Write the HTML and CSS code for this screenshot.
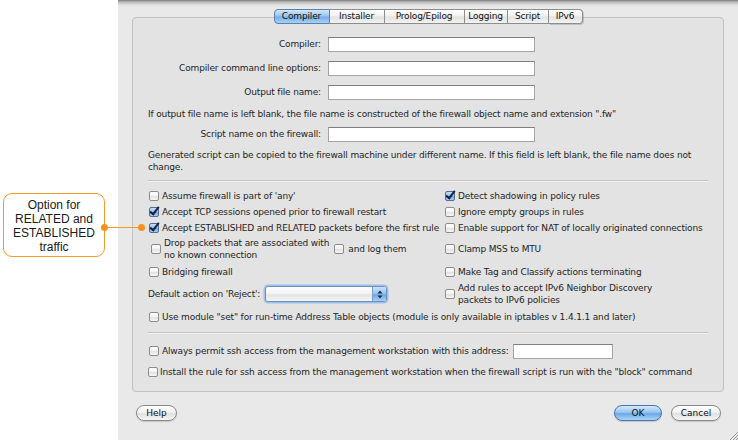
FILE: index.html
```html
<!DOCTYPE html>
<html>
<head>
<meta charset="utf-8">
<title>Firewall settings</title>
<link rel="stylesheet" href="styles.css">
</head>
<body>
<div class="page">
  <aside class="annot">
    <div class="callout">Option for<br>RELATED and<br>ESTABLISHED<br>traffic</div>
    <div class="connector"><span class="dot dot-l"></span><span class="dot dot-r"></span></div>
  </aside>
  <main class="dialog">
    <section class="group">
      <nav class="tabs">
        <span class="tab tab-compiler sel">Compiler</span>
        <span class="tab tab-installer">Installer</span>
        <span class="tab tab-prolog">Prolog/Epilog</span>
        <span class="tab tab-logging">Logging</span>
        <span class="tab tab-script">Script</span>
        <span class="tab tab-ipv6">IPv6</span>
      </nav>

      <div class="fields">
        <label class="flabel">Compiler:</label><span class="input"></span>
        <label class="flabel">Compiler command line options:</label><span class="input"></span>
        <label class="flabel">Output file name:</label><span class="input"></span>
      </div>
      <p class="note note-1">If output file name is left blank, the file name is constructed of the firewall object name and extension ".fw"</p>
      <div class="fields fields-script">
        <label class="flabel">Script name on the firewall:</label><span class="input"></span>
      </div>
      <p class="note note-2">Generated script can be copied to the firewall machine under different name. If this field is left blank, the file name does not change.</p>

      <div class="sep sep-1"></div>

      <div class="options">
        <div class="opt"><span class="cb"></span><span>Assume firewall is part of 'any'</span></div>
        <div class="opt opt-r"><span class="cb on"></span><span>Detect shadowing in policy rules</span></div>

        <div class="opt"><span class="cb on"></span><span>Accept TCP sessions opened prior to firewall restart</span></div>
        <div class="opt opt-r"><span class="cb"></span><span>Ignore empty groups in rules</span></div>

        <div class="opt"><span class="cb on"></span><span>Accept ESTABLISHED and RELATED packets before the first rule</span></div>
        <div class="opt opt-r"><span class="cb"></span><span>Enable support for NAT of locally originated connections</span></div>

        <div class="opt opt-drop"><span class="cb"></span><span class="drop-text">Drop packets that are associated with<br>no known connection</span><span class="cb cb-log"></span><span>and log them</span></div>
        <div class="opt opt-r"><span class="cb"></span><span>Clamp MSS to MTU</span></div>

        <div class="opt"><span class="cb"></span><span>Bridging firewall</span></div>
        <div class="opt opt-r"><span class="cb"></span><span>Make Tag and Classify actions terminating</span></div>

        <div class="opt opt-reject"><span class="reject-label">Default action on 'Reject':</span><span class="popup"><span class="popup-arrows"><svg width="6" height="9" viewBox="0 0 6 9"><path d="M3 0.5 L5.5 3.5 H0.5 Z M3 8.5 L5.5 5.5 H0.5 Z" fill="#1b2b44"/></svg></span></span></div>
        <div class="opt opt-r opt-wrap"><span class="cb"></span><span class="wrap-text">Add rules to accept IPv6 Neighbor Discovery<br>packets to IPv6 policies</span></div>

        <div class="opt opt-span"><span class="cb"></span><span>Use module "set" for run-time Address Table objects (module is only available in iptables v 1.4.1.1 and later)</span></div>
      </div>

      <div class="sep sep-2"></div>

      <div class="opt opt-ssh"><span class="cb"></span><span>Always permit ssh access from the management workstation with this address:</span><span class="input input-addr"></span></div>
      <div class="opt opt-install"><span class="cb"></span><span>Install the rule for ssh access from the management workstation when the firewall script is run with the "block" command</span></div>
    </section>

    <footer class="buttons">
      <button class="btn btn-help">Help</button>
      <span class="spacer"></span>
      <button class="btn btn-ok">OK</button>
      <button class="btn btn-cancel">Cancel</button>
    </footer>
    <svg class="grip" width="9" height="9" viewBox="0 0 9 9"><path d="M9 1 L1 9 M9 4 L4 9 M9 7 L7 9" stroke="#9a9a9a" stroke-width="1"/></svg>
  </main>
</div>
</body>
</html>
```

FILE: styles.css
```css
* { box-sizing: border-box; }
html, body { margin: 0; padding: 0; background: #ffffff; }
body { width: 738px; height: 440px; overflow: hidden; }

.page {
  display: flex;
  width: 738px;
  height: 440px;
}

/* annotation */
.annot {
  width: 118px;
  flex: none;
  position: relative;
}
.callout {
  margin: 193px 0 0 3px;
  width: 102px;
  height: 64px;
  border: 1.3px solid #f59a2e;
  border-radius: 9px;
  background: #fff;
  font-family: "Liberation Sans", Arial, sans-serif;
  font-size: 12px;
  line-height: 14px;
  color: #1a1a1a;
  text-align: center;
  padding-top: 4px;
}
.connector {
  position: absolute;
  left: 104px;
  top: 227px;
  width: 38px;
  height: 1.4px;
  background: #f59a2e;
  z-index: 2;
}
.dot {
  position: absolute;
  top: -3px;
  width: 7px;
  height: 7px;
  border-radius: 50%;
  background: #f7921c;
}
.dot-l { left: -3px; }
.dot-r { right: -3px; }

/* dialog */
.dialog {
  flex: 1;
  position: relative;
  height: 440px;
  background: linear-gradient(#7c7c7c 0, #b9b9b9 2px, #e1e1e1 5px, #e9e9e9 8px);
  font-family: "DejaVu Sans", "Lucida Grande", sans-serif;
  font-size: 9px;
  letter-spacing: -0.15px;
  color: #1e1e1e;
  padding-top: 17px;
}

.group {
  margin: 0 14px;
  border: 1px solid #c2c2c2;
  border-radius: 4px;
  background: #e3e3e3;
  padding: 0 15px 11px 15px;
}

.tabs {
  display: flex;
  justify-content: center;
  margin-top: -9px;
  height: 15px;
}
.tab {
  height: 15px;
  line-height: 13px;
  text-align: center;
  border: 1px solid #8d8d8d;
  border-left: none;
  background: linear-gradient(#ffffff, #f1f1f1 45%, #e2e2e2 55%, #f3f3f3);
  color: #111;
}
.tab:first-child { border-left: 1px solid #5b7fae; border-radius: 4px 0 0 4px; }
.tab:last-child { border-radius: 0 4px 4px 0; box-shadow: 1px 1px 0 rgba(0,0,0,0.15); }
.tab.sel {
  background: linear-gradient(#d2e6f9, #9ac6f0 45%, #74aeea 55%, #a9d3f7);
  border-color: #5b7fae;
}
.tab-compiler { width: 56px; }
.tab-installer { width: 55px; }
.tab-prolog { width: 80px; }
.tab-logging { width: 43px; }
.tab-script { width: 41px; }
.tab-ipv6 { width: 34px; }

/* text fields */
.fields {
  display: grid;
  grid-template-columns: 173px 207px;
  column-gap: 7px;
  grid-auto-rows: 24px;
  align-items: center;
  margin-top: 8px;
}
.fields-script { margin-top: 2px; }
.flabel { text-align: right; }
.input {
  display: block;
  height: 15px;
  background: #fff;
  border: 1px solid #a4a4a4;
  border-top-color: #7f7f7f;
}
.note {
  margin: 0;
  line-height: 12px;
}
.note-1 { margin-top: 4px; }
.note-2 { margin-top: 3px; }

.sep {
  height: 1px;
  background: #c6c6c6;
  box-shadow: 0 1px 0 #f0f0f0;
}
.sep-1 { margin-top: 7px; }
.sep-2 { margin-top: 5px; }

/* checkbox options */
.options {
  display: grid;
  grid-template-columns: 296px 1fr;
  grid-template-rows: 16px 16px 16px 25px 21px 24px 21px;
  align-items: center;
  margin-top: 7px;
}
.opt {
  display: flex;
  align-items: center;
  gap: 3px;
  white-space: nowrap;
}
.opt-span { grid-column: 1 / 3; }

.cb {
  flex: none;
  width: 10px;
  height: 10px;
  margin-left: 1px;
  border: 1px solid #8b8b8b;
  border-radius: 2px;
  background: linear-gradient(#ffffff, #f2f2f2 50%, #e3e3e3 55%, #f7f7f7);
  position: relative;
}
.cb.on {
  border-color: #4e6f9c;
  background: linear-gradient(#c8e0f7, #8fbfee 50%, #6aa6e6 55%, #a5d0f7);
}
.cb.on::after {
  content: "";
  position: absolute;
  left: 2px;
  top: -3px;
  width: 3px;
  height: 8px;
  border-right: 2px solid #1a1f3a;
  border-bottom: 2px solid #1a1f3a;
  transform: rotate(38deg);
  transform-origin: 50% 50%;
}

.opt-drop > .cb:first-child { margin-left: 3px; }
.drop-text { line-height: 12px; }
.cb-log { margin-left: 2px; margin-right: 1px; }

.opt-wrap .wrap-text { line-height: 12px; }

.opt-reject { gap: 5px; }
.popup {
  display: flex;
  justify-content: flex-end;
  width: 122px;
  height: 16px;
  border: 1px solid #6c8fc0;
  border-radius: 3px;
  background: linear-gradient(#ffffff, #f0f0f0 50%, #e4e4e4 55%, #f6f6f6);
  box-shadow: 0 0 0 1.5px #9fc0ea;
  overflow: hidden;
}
.popup-arrows {
  width: 14px;
  display: flex;
  align-items: center;
  justify-content: center;
  background: linear-gradient(#cfe4f8, #8fbff0 50%, #6ba7e7 55%, #a7d1f7);
  border-left: 1px solid #7d9fcc;
}

.opt-ssh { margin-top: 10px; height: 16px; }
.input-addr { width: 100px; margin-left: 1px; }
.opt-install { margin-top: 5px; height: 16px; gap: 2px; }
.opt-install .cb { margin-left: 0; }

/* buttons */
.buttons {
  display: flex;
  align-items: center;
  margin: 13px 17px 0 18px;
  height: 16px;
  gap: 9px;
}
.spacer { flex: 1; }
.btn {
  font-family: "DejaVu Sans", "Lucida Grande", sans-serif;
  font-size: 9px;
  color: #111;
  height: 16px;
  padding: 0;
  border: 1px solid #8a8a8a;
  border-radius: 8px;
  background: linear-gradient(#ffffff, #f3f3f3 45%, #e0e0e0 55%, #f6f6f6);
  box-shadow: 0 1px 1px rgba(0,0,0,0.15);
}
.btn-help { width: 41px; }
.btn-ok {
  width: 48px;
  border-color: #4d73a8;
  background: linear-gradient(#d4e8fb, #98c6f1 45%, #6aa8ea 55%, #a9d5fa);
}
.btn-cancel { width: 50px; }

.grip {
  position: absolute;
  right: 0;
  bottom: 0;
}
```
